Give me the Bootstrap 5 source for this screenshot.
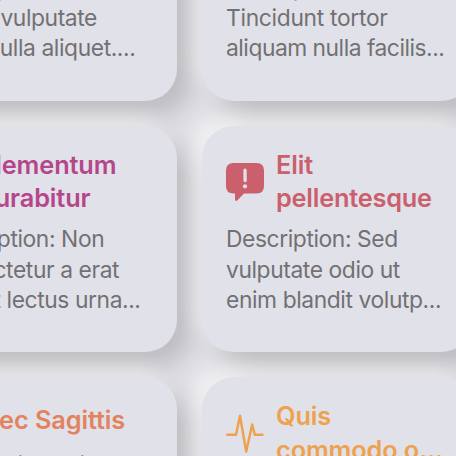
<!DOCTYPE html>
<html lang="en">
<head>
<meta charset="utf-8">
<meta name="viewport" content="width=device-width, initial-scale=1">
<title>Cards</title>
<link href="https://cdn.jsdelivr.net/npm/bootstrap@5.3.0/dist/css/bootstrap.min.css" rel="stylesheet">
<style>
body{background:#e4e3e8;font-family:Inter,"Liberation Sans",sans-serif;width:456px;height:456px}
.board{display:grid;grid-template-columns:271px 271px;grid-auto-rows:226.3px;gap:25.2px 25px;margin:-125.5px 0 0 -94px;width:567px}
.tile{background:#e1e1e9;border:0;border-radius:32px;padding:22px 24px;box-shadow:15px 15px 28px rgba(0,0,0,.18),-8px -8px 18px rgba(255,255,255,.5)}
.heading{font-size:25.3px;line-height:33.5px;font-weight:600;white-space:nowrap;letter-spacing:-.1px}
.wide-word{letter-spacing:-.2px}
.glyph{width:38px;height:40px;margin-right:12px;position:relative;top:1px}
.copy{font-size:22.8px;line-height:30.3px;color:#717173;margin-top:9.4px;white-space:nowrap;letter-spacing:-.4px}
.tight{letter-spacing:-.48px}
.loose{letter-spacing:-.3px}
.nudge{padding-left:2px}
.pink{color:#b5468b}.red{color:#cb5f6c}.coral{color:#e2835f}.amber{color:#eea24f}
</style>
<script src="https://cdn.jsdelivr.net/npm/bootstrap@5.3.0/dist/js/bootstrap.bundle.min.js"></script>
</head>
<body class="overflow-hidden">
<main class="board">
<article class="card tile"><div class="d-flex align-items-center"><span class="glyph"></span><div class="heading pink">Amet<br>Lorem</div></div>
<div class="copy">Description: At<br><span class="nudge">lectus</span> vulputate<br>diam nulla aliquet....</div></article>
<article class="card tile"><div class="d-flex align-items-center"><span class="glyph"></span><div class="heading red">Nulla<br>Tempor</div></div>
<div class="copy">Description:<br><span class="loose">Tincidunt tortor</span><br><span class="tight">aliquam nulla facilis...</span></div></article>
<article class="card tile"><div class="d-flex align-items-center"><span class="glyph"></span><div class="heading pink">Elementum<br>curabitur</div></div>
<div class="copy">Description: Non<br>consectetur a erat<br>nam at lectus urna...</div></article>
<article class="card tile"><div class="d-flex align-items-center"><svg class="glyph red" viewBox="0 0 38 40" fill="currentColor"><path d="M7.5 1H30.500Q38 1 38 8.500V24Q38 31.500 30.500 31.500H18L11.500 38.200Q9 40.200 9 37V31.500H7.500Q0 31.500 0 24V8.500Q0 1 7.500 1Z"/><path d="M19 8.200L19.100 18.600" stroke="#e1e1e9" stroke-width="3.300" stroke-linecap="round"/><circle cx="19" cy="24.300" r="2.100" fill="#e1e1e9"/></svg><div class="heading red">Elit<br><span class="wide-word">pellentesque</span></div></div>
<div class="copy">Description: Sed<br>vulputate odio ut<br>enim blandit volutp...</div></article>
<article class="card tile"><div class="d-flex align-items-center"><span class="glyph"></span><div class="heading coral py-1">Nec Sagittis</div></div>
<div class="copy">Description: Elit<br>aliquet risus feugiat<br>in ante metus...</div></article>
<article class="card tile"><div class="d-flex align-items-center"><svg class="glyph amber" viewBox="0 0 38 40" fill="none" stroke="currentColor" stroke-width="2.500" stroke-linecap="round" stroke-linejoin="round"><path d="M1.300 20.800H10L14 1.800L20.200 37.500L26.200 10.500L28.800 20.800H36.500"/></svg><div class="heading amber">Quis<br>commodo o...</div></div>
<div class="copy">Description: Amet<br>consectetur elit<br>vitae nunc sed...</div></article>
</main>
</body>
</html>
